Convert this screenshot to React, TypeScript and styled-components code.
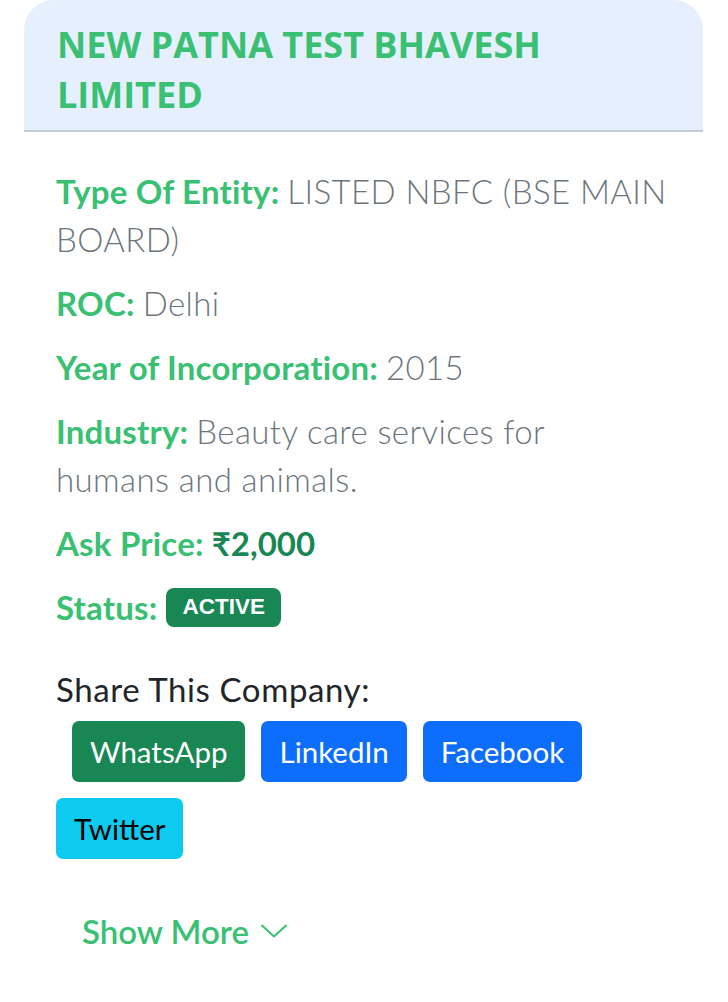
import React from "react";
import styled, { createGlobalStyle } from "styled-components";

const GlobalStyle = createGlobalStyle`
  html, body { margin: 0; padding: 0; background: #ffffff; }
  body { font-family: "Lato", "Open Sans", sans-serif; }
  * { box-sizing: border-box; }
`;

const Page = styled.div`
  padding: 0 25px 0 24px;
`;

const Card = styled.section`
  width: 679px;
  border-radius: 30px 30px 0 0;
  overflow: hidden;
  background: #ffffff;
`;

const Header = styled.header`
  background: #e5effd;
  border-bottom: 2px solid #c3cddd;
  padding: 20px 32px 10px 33px;
`;

const Title = styled.h1`
  margin: 0;
  font-family: "Open Sans", sans-serif;
  font-weight: 700;
  font-stretch: 92%;
  font-size: 36px;
  line-height: 50px;
  color: #3ac073;
  letter-spacing: 0;
`;

const Body = styled.div`
  padding: 35px 32px 0 32px;
  display: flex;
  flex-direction: column;
  gap: 16px;
`;

const Line = styled.p<{ $maxWidth?: number }>`
  margin: 0;
  font-size: 33px;
  line-height: 48px;
  color: #6c757d;
  font-weight: 300;
  letter-spacing: 0.4px;
  max-width: ${(p) => (p.$maxWidth ? `${p.$maxWidth}px` : "none")};
`;

const StatusLine = styled(Line)`
  display: flex;
  align-items: center;
`;

const Label = styled.strong`
  color: #3ac073;
  font-weight: 700;
  letter-spacing: 0.2px;
  margin-right: 8px;
`;

const Price = styled.span`
  color: #198754;
  font-weight: 700;
  letter-spacing: 0;
`;

const Badge = styled.span`
  display: inline-flex;
  align-items: center;
  height: 39px;
  padding: 0 16px;
  border-radius: 8px;
  background: #198754;
  color: #ffffff;
  font-family: "Liberation Sans", Arial, sans-serif;
  font-weight: 700;
  font-size: 22.5px;
  letter-spacing: 0;
  margin-left: 1px;
`;

const ShareTitle = styled.h2`
  margin: 18px 0 0 0;
  font-size: 33px;
  line-height: 48px;
  font-weight: 400;
  letter-spacing: 0.6px;
  color: #212529;
`;

const Buttons = styled.div`
  display: flex;
  flex-wrap: wrap;
  gap: 16px;
  margin-top: -8px;
`;

const ShareButton = styled.a<{ $bg: string; $fg: string; $indent?: boolean }>`
  display: inline-flex;
  align-items: center;
  height: 61px;
  padding: 0 18px;
  border-radius: 7px;
  background: ${(p) => p.$bg};
  color: ${(p) => p.$fg};
  font-size: 29.5px;
  font-weight: 400;
  text-decoration: none;
  margin-left: ${(p) => (p.$indent ? "16px" : "0")};
`;

const ShowMore = styled.button`
  display: inline-flex;
  align-items: center;
  gap: 12px;
  margin: 32px 0 0 0;
  padding: 0 26px;
  align-self: flex-start;
  border: none;
  background: transparent;
  color: #3ac073;
  font-family: "Lato", sans-serif;
  font-size: 33px;
  font-weight: 600;
  line-height: 48px;
  cursor: pointer;
`;

const Chevron = () => (
  <svg width="26" height="14" viewBox="0 0 26 14" fill="none">
    <path d="M1 1.5 L13 12.5 L25 1.5" stroke="#3ac073" strokeWidth="2" strokeLinecap="round" strokeLinejoin="round" />
  </svg>
);

export default function App() {
  return (
    <Page>
      <GlobalStyle />
      <Card>
        <Header>
          <Title>NEW PATNA TEST BHAVESH LIMITED</Title>
        </Header>
        <Body>
          <Line>
            <Label>Type Of Entity:</Label>LISTED NBFC (BSE MAIN BOARD)
          </Line>
          <Line>
            <Label>ROC:</Label>Delhi
          </Line>
          <Line>
            <Label>Year of Incorporation:</Label>2015
          </Line>
          <Line $maxWidth={590}>
            <Label>Industry:</Label>Beauty care services for humans and animals.
          </Line>
          <Line>
            <Label>Ask Price:</Label>
            <Price>₹2,000</Price>
          </Line>
          <StatusLine>
            <Label>Status:</Label>
            <Badge>ACTIVE</Badge>
          </StatusLine>
          <ShareTitle>Share This Company:</ShareTitle>
          <Buttons>
            <ShareButton href="#" $bg="#198754" $fg="#ffffff" $indent>WhatsApp</ShareButton>
            <ShareButton href="#" $bg="#0d6efd" $fg="#ffffff">LinkedIn</ShareButton>
            <ShareButton href="#" $bg="#0d6efd" $fg="#ffffff">Facebook</ShareButton>
            <ShareButton href="#" $bg="#0dcaf0" $fg="#000000">Twitter</ShareButton>
          </Buttons>
          <ShowMore>
            <span>Show More</span>
            <Chevron />
          </ShowMore>
        </Body>
      </Card>
    </Page>
  );
}
